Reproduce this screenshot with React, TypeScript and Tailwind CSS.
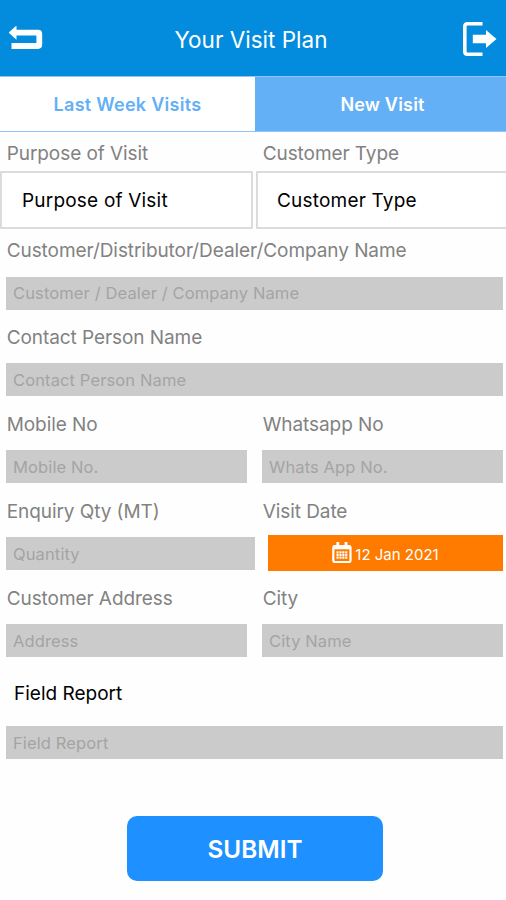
import React, { useState } from 'react';

interface FieldProps {
  label: string;
  placeholder: string;
  className?: string;
}

const Label: React.FC<{ text: string }> = ({ text }) => (
  <label className="block h-[34px] pl-[0.7px] pt-[0.8px] text-[19px] leading-[34px] tracking-[-0.07px] text-[#828282] whitespace-nowrap">{text}</label>
);

const Field: React.FC<FieldProps> = ({ label, placeholder, className = '' }) => (
  <div className={`h-[86.9px] shrink-0 ${className}`}>
    <Label text={label} />
    <input
      type="text"
      placeholder={placeholder}
      className="mt-[9px] block h-[33px] w-full bg-[#cbcbcb] px-[7px] text-[16.5px] tracking-[0.12px] text-black placeholder:text-[#a4a4a4] outline-none"
    />
  </div>
);

const BackIcon = () => (
  <svg width="34" height="24" viewBox="0 0 34 24" fill="none">
    <path d="M6 6.6H29Q30.3 6.6 30.3 8V18.5Q30.3 20 29 20H2.5" stroke="white" strokeWidth="5.8" />
    <path d="M-0.5 6.6L7.5 -0.5V13.7Z" fill="white" />
  </svg>
);

const LogoutIcon = () => (
  <svg width="34" height="34" viewBox="0 0 34 34" fill="none">
    <path d="M19.5 1.8H4.5Q1.8 1.8 1.8 4.5V29.5Q1.8 32.2 4.5 32.2H19.5" stroke="white" strokeWidth="3.6" />
    <path d="M9.8 12.8H23V8L33.5 17L23 26V21.2H9.8Z" fill="white" />
  </svg>
);

const CalendarIcon = () => (
  <svg width="20" height="22" viewBox="0 0 20 22" fill="none">
    <rect x="1.3" y="4" width="17.2" height="16" rx="1.8" stroke="white" strokeWidth="2.2" />
    <path d="M1.5 5.3H18.5" stroke="white" strokeWidth="4" />
    <path d="M5.8 0V5M14 0V5" stroke="white" strokeWidth="2.8" />
    <path d="M4.5 10.2H15.3M4.5 12.9H15.3M4.5 15.6H15.3" stroke="white" strokeWidth="2.1" strokeDasharray="2.1 0.8" />
  </svg>
);

export default function App() {
  const [visitDate] = useState('12 Jan 2021');

  return (
    <div className="h-[900px] w-[506px] overflow-hidden bg-[#fefefe] font-['Inter',sans-serif]">
      {/* Header */}
      <header className="flex h-[76px] items-center justify-between bg-[#038cdd] pl-[9px] pr-[9px] text-white">
        <button className="w-[34px]"><BackIcon /></button>
        <h1 className="pt-1 pr-1 text-[22.5px]">Your Visit Plan</h1>
        <button className="w-[34px] pt-[2px]"><LogoutIcon /></button>
      </header>

      {/* Tabs */}
      <nav className="flex h-14 border-y border-[#8fc5f8] text-[18px] font-semibold">
        <button className="w-[255px] bg-white text-[#64b0f6] tracking-[0.28px]">Last Week Visits</button>
        <button className="flex-1 bg-[#64b0f6] pl-[4px] tracking-[0.2px] text-white">New Visit</button>
      </nav>

      <form onSubmit={(e) => e.preventDefault()}>
        {/* Dropdowns */}
        <div className="flex h-[39px] pl-1.5 pt-1">
          <div className="w-64"><Label text="Purpose of Visit" /></div>
          <Label text="Customer Type" />
        </div>
        <div className="flex gap-[3px] text-[19px] tracking-[0.2px] text-black">
          <button type="button" className="h-[58px] w-[253px] border-2 border-[#dcdcdc] bg-white pl-5 pt-0.5 text-left">Purpose of Visit</button>
          <button type="button" className="h-[58px] flex-1 border-2 border-r-0 border-[#dcdcdc] bg-white pl-[19px] pt-0.5 text-left">Customer Type</button>
        </div>

        <div className="px-1.5 pt-[4.5px]">
          <Field label="Customer/Distributor/Dealer/Company Name" placeholder="Customer / Dealer / Company Name" className="w-[497px]" />
          <Field label="Contact Person Name" placeholder="Contact Person Name" className="w-[497px]" />
          <div className="flex gap-[15px]">
            <Field label="Mobile No" placeholder="Mobile No." className="w-[241px]" />
            <Field label="Whatsapp No" placeholder="Whats App No." className="w-[241px]" />
          </div>
          <div className="flex gap-[7px]">
            <Field label="Enquiry Qty (MT)" placeholder="Quantity" className="w-[249px]" />
            <div className="w-[241px] shrink-0">
              <Label text="Visit Date" />
              <button type="button" className="ml-1.5 mt-[7px] flex h-9 w-[235px] items-center justify-center gap-[3px] bg-[#ff7b00] text-[15px] text-white">
                <CalendarIcon />
                <span className="pt-1">{visitDate}</span>
              </button>
            </div>
          </div>
          <div className="flex gap-[15px]">
            <Field label="Customer Address" placeholder="Address" className="w-[241px]" />
            <Field label="City" placeholder="City Name" className="w-[241px]" />
          </div>
          <label className="block h-[58.5px] pl-2 pt-[9px] text-[19px] leading-[34px] text-black">Field Report</label>
          <input
            type="text"
            placeholder="Field Report"
            className="block h-[33px] w-[497px] bg-[#cbcbcb] px-[7px] text-[16.5px] tracking-[0.12px] placeholder:text-[#a4a4a4] outline-none"
          />
        </div>

        <button type="submit" className="ml-[127px] mt-[57px] block h-[65px] w-64 rounded-[10px] bg-[#1e90ff] text-[24.3px] font-semibold text-white">
          SUBMIT
        </button>
      </form>
    </div>
  );
}
